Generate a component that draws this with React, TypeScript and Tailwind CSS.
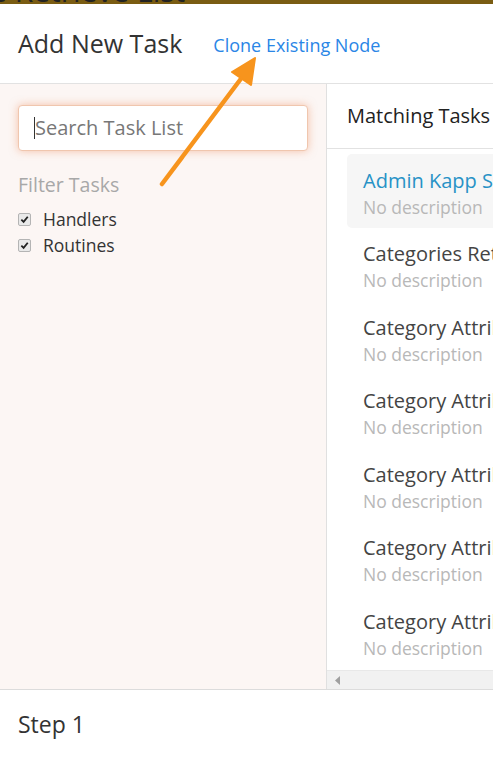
import { useState } from "react";

const tasks = [
  "Admin Kapp Space Retrieve",
  "Categories Retrieve",
  "Category Attribute Create",
  "Category Attribute Delete",
  "Category Attribute Retrieve",
  "Category Attribute Update",
  "Category Attributes Retrieve",
];

function Check({ label }: { label: string }) {
  return (
    <label className="flex items-center gap-3 h-[26px] text-[17.5px] text-[#333]">
      <span className="w-[13px] h-[13px] rounded-[2px] border border-[#b4b4b4] bg-[#e9e9e9] flex items-center justify-center">
        <svg width="9" height="9" viewBox="0 0 10 10">
          <path d="M1.5 5.2 L4 7.6 L8.6 2" stroke="#222" strokeWidth="2" fill="none" />
        </svg>
      </span>
      {label}
    </label>
  );
}

export default function App() {
  const [query, setQuery] = useState("");

  return (
    <div className="relative w-[493px] h-[759px] overflow-hidden bg-white font-['Open_Sans',sans-serif]">
      <div className="h-[4px] bg-[#7a5c12] overflow-hidden">
        <p className="-mt-[22px] ml-[-10px] text-[30px] leading-[26px] text-[#222]">e Retrieve List</p>
      </div>

      <div className="h-[80px] flex items-center px-[18px] border-b border-[#e2e2e2]">
        <h1 className="text-[25px] text-[#333] whitespace-nowrap">Add New Task</h1>
        <a className="ml-[31px] text-[18px] text-[#2a86e6] whitespace-nowrap mt-[4px]">Clone Existing Node</a>
      </div>

      <div className="flex h-[606px] border-b border-[#dcdcdc]">
        <div className="w-[327px] shrink-0 bg-[#fcf6f4] border-r border-[#e0e0e0] px-[18px] pt-[21px]">
          <div className="h-[46px] rounded-[4px] bg-white border border-[#f0c6ae] shadow-[0_0_8px_rgba(240,140,90,0.5)] flex items-center px-[15px]">
            <span className="w-px h-[22px] bg-[#333]" />
            <input
              value={query}
              onChange={(e) => setQuery(e.target.value)}
              placeholder="Search Task List"
              className="flex-1 min-w-0 bg-transparent outline-none text-[20px] text-[#333] placeholder:text-[#777]"
            />
          </div>
          <p className="mt-[19px] text-[19.5px] text-[#a8a8a8]">Filter Tasks</p>
          <div className="mt-[7px]">
            <Check label="Handlers" />
            <Check label="Routines" />
          </div>
        </div>

        <div className="flex-1 min-w-0 flex flex-col overflow-hidden">
          <div className="h-[65px] shrink-0 flex items-center px-[20px] border-b border-[#e2e2e2]">
            <h2 className="text-[20px] text-[#222] whitespace-nowrap">Matching Tasks</h2>
          </div>
          <ul className="flex-1 pt-[5px] pl-[20px]">
            {tasks.map((t, i) => (
              <li
                key={t}
                className={`h-[73.5px] pl-[16px] pt-[6px] flex flex-col justify-center rounded-l-[5px] ${i === 0 ? "bg-[#f6f6f6]" : ""}`}
              >
                <p className={`text-[20px] leading-[27px] whitespace-nowrap ${i === 0 ? "text-[#2792c6]" : "text-[#444]"}`}>{t}</p>
                <p className="text-[17.5px] leading-[27px] text-[#b8b8b8] whitespace-nowrap">No description</p>
              </li>
            ))}
          </ul>
          <div className="h-[19px] shrink-0 bg-[#f1f1f1] border-t border-[#e8e8e8] flex items-center pl-[8px]">
            <svg width="6" height="9" viewBox="0 0 6 9">
              <path d="M5 0 L0 4.5 L5 9 Z" fill="#a0a0a0" />
            </svg>
          </div>
        </div>
      </div>

      <div className="h-[68px] flex items-center px-[18px]">
        <h3 className="text-[23px] text-[#333]">Step 1</h3>
      </div>

      <svg className="absolute left-0 top-0 pointer-events-none" width="493" height="759">
        <line x1="162" y1="184" x2="246" y2="72" stroke="#f7941d" strokeWidth="4.5" strokeLinecap="round" />
        <polygon points="255,58 232,72 251,85" fill="#f7941d" stroke="#f7941d" strokeWidth="2" strokeLinejoin="round" />
      </svg>
    </div>
  );
}
